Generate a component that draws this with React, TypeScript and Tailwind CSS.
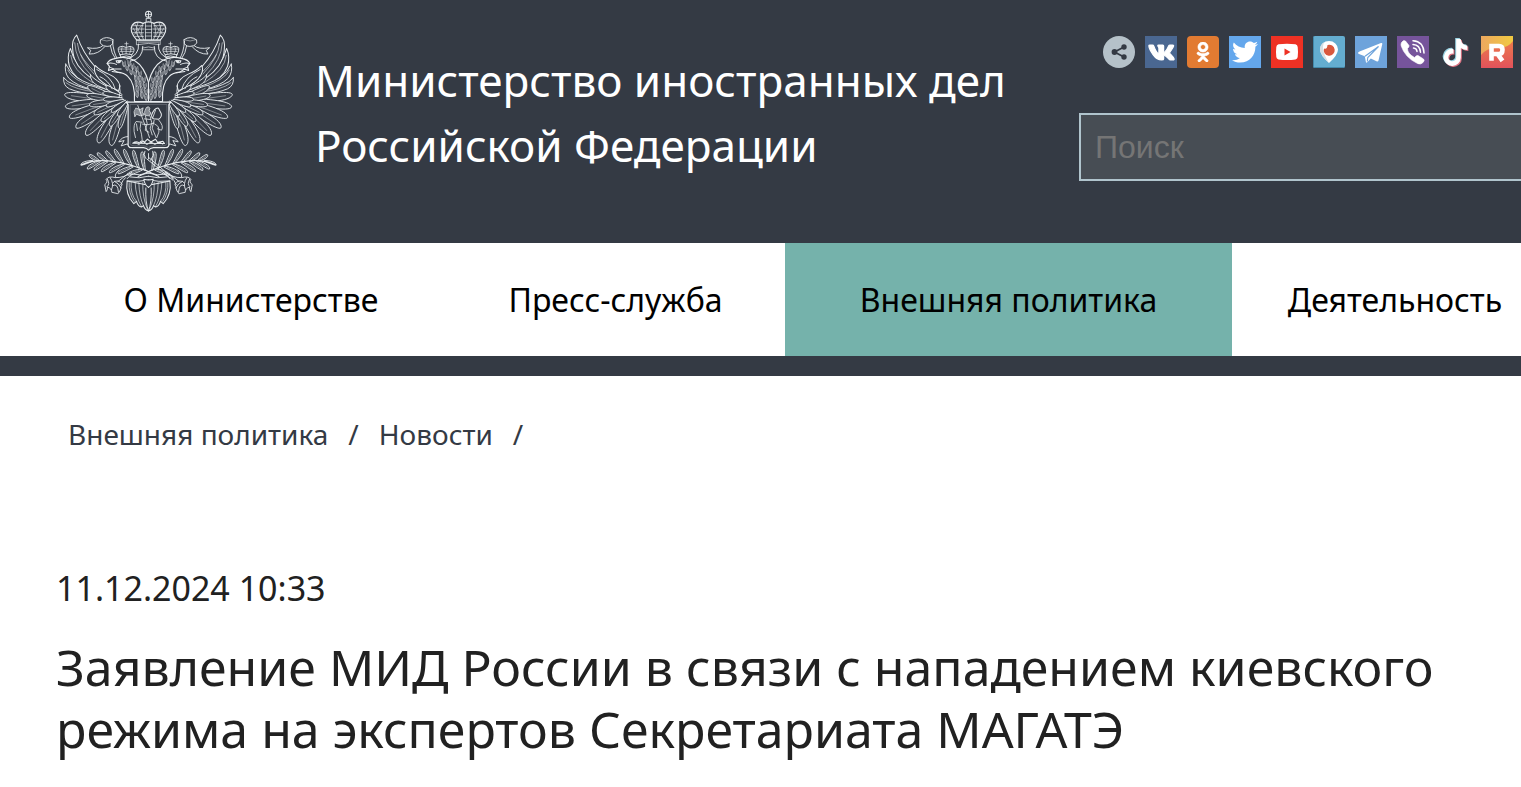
import React from "react";
import { FaOdnoklassniki, FaTiktok, FaTwitter, FaVk } from "react-icons/fa";

const DARK = "#343a44";
const LIGHT = "#e9edf0";

type Leaf = [number, number, number, number, number, number];

/* Feather from root (x0, y0) to tip (x1, y1); w is the half width, b bends the blade. */
function blade([x0, y0, x1, y1, w, b]: Leaf) {
  const dx = x1 - x0;
  const dy = y1 - y0;
  const len = Math.hypot(dx, dy);
  const nx = -dy / len;
  const ny = dx / len;
  const p = (t: number, o: number) => `${(x0 + dx * t + nx * o).toFixed(1)} ${(y0 + dy * t + ny * o).toFixed(1)}`;
  return {
    outline: `M${p(0, w * 0.3)}C${p(0.35, w + b)} ${p(0.98, w * 1.5 + b * 0.6)} ${p(1, 0)}C${p(0.98, -w * 1.3 + b * 0.6)} ${p(0.35, -w + b)} ${p(0, -w * 0.3)}`,
    rib: `M${p(0.2, b * 0.5)}Q${p(0.55, b)} ${p(0.86, b * 0.3)}`,
  };
}

const outerFeathers: Leaf[] = [
  [190, 295, 44, 283, 13, -7],
  [190, 300, 46, 320, 13, 0],
  [195, 305, 58, 352, 13, 4],
  [200, 310, 78, 383, 13, 6],
  [205, 315, 108, 405, 13, 6],
  [212, 318, 145, 428, 13, 6],
  [222, 320, 184, 436, 13, 6],
];

const middleFeathers: Leaf[] = [
  [205, 294, 113, 258, 10, -7],
  [205, 300, 110, 285, 10, -2],
  [208, 304, 118, 315, 10, 2],
  [212, 308, 132, 342, 10, 3],
  [218, 310, 154, 364, 9, 3],
  [226, 312, 180, 378, 9, 3],
  [232, 314, 208, 385, 8, 3],
];

const innerFeathers: Leaf[] = [
  [215, 285, 168, 258, 7, -3],
  [215, 290, 158, 278, 7, 0],
  [218, 296, 160, 298, 7, 0],
  [222, 300, 168, 318, 7, 1],
  [228, 302, 184, 336, 7, 1],
  [234, 304, 204, 348, 7, 1],
];

const laurel: Leaf[] = [
  [128, 482, 93, 494, 4, 3],
  [146, 481, 118, 464, 5, -2],
  [150, 483, 112, 506, 5, 3],
  [172, 482, 142, 458, 5, -3],
  [172, 484, 132, 510, 5, 3],
  [196, 485, 168, 452, 5, -3],
  [196, 487, 154, 514, 5, 3],
  [220, 489, 194, 447, 5, -3],
  [222, 492, 178, 517, 5, 3],
  [244, 495, 222, 447, 5, -3],
  [248, 499, 204, 520, 5, 3],
  [266, 503, 250, 450, 5, -3],
  [276, 508, 232, 524, 5, 2],
  [284, 510, 276, 454, 5, -3],
];

const neckTufts: [number, number][] = [
  [222, 192], [238, 190], [232, 204], [248, 200], [260, 208], [244, 216], [256, 222], [270, 222],
  [258, 236], [270, 238], [282, 240], [260, 252], [272, 254], [285, 258], [262, 268], [275, 271],
  [288, 276], [262, 284], [276, 287], [288, 293],
];

function Feathers({ items, rib }: { items: Leaf[]; rib?: boolean }) {
  return (
    <>
      {items.map((item, i) => {
        const s = blade(item);
        return (
          <g key={i}>
            <path d={s.outline} fill={DARK} />
            {rib && <path d={s.rib} fill="none" strokeWidth={1.8} opacity={0.75} />}
          </g>
        );
      })}
    </>
  );
}

function EmblemHalf() {
  return (
    <g>
      {/* raised flight feathers */}
      <path d="M80 105Q64 119 68 148Q70 196 116 232L175 270L185 240L135 200Q98 158 80 105Z" fill={DARK} strokeWidth={3} />
      <path d="M82 130Q86 174 132 222M74 128Q76 180 122 224M92 164Q110 196 150 230" fill="none" strokeWidth={1.8} />
      <path d="M61 145Q50 170 58 198Q72 236 122 256L175 278L178 262Q112 236 84 196Q68 172 61 145Z" fill={DARK} strokeWidth={3} />
      <path d="M62 166Q66 210 128 248" fill="none" strokeWidth={1.8} />
      <path d="M47 192Q42 216 56 234Q80 258 128 268L180 284L178 270Q110 252 80 232Q58 216 47 192Z" fill={DARK} />
      <path d="M53 210Q66 240 134 262" fill="none" strokeWidth={1.8} />
      <path d="M41 233Q38 256 58 266Q90 280 140 282L185 292L180 278Q110 270 74 254Q50 246 41 233Z" fill={DARK} />
      <path d="M48 248Q76 270 138 275" fill="none" strokeWidth={1.8} />
      <Feathers items={outerFeathers} rib />
      <path d="M135 196Q128 216 146 236Q168 258 205 272L210 258Q204 234 176 222Q150 212 135 196Z" fill={DARK} strokeWidth={3} />
      <path d="M121 224Q120 244 142 256Q170 270 205 282L205 272Q164 258 142 242Q128 234 121 224Z" fill={DARK} />
      <Feathers items={middleFeathers} rib />
      <Feathers items={innerFeathers} />
      <path d="M140 208Q186 230 196 268M150 230Q174 240 186 266M208 256Q213 276 207 292" fill="none" />

      {/* ribbon */}
      <path d="M152 119Q169 106 189 119L188 131Q179 141 171 139Q158 140 151 130ZM158 137Q145 149 112 143L122 151L117 162Q145 163 164 140M187 123Q190 157 201 175M181 138Q184 160 195 174" fill="none" />
      <path d="M152 119Q170 127 189 119" fill="none" strokeWidth={1.4} />

      {/* head and neck */}
      <path d="M295 247Q283 199 253 181Q226 167 197 175Q177 178 171 190L178 199L175 211L187 207L201 216Q223 218 233 229Q256 250 253 304H295Z" fill={DARK} strokeWidth={3.4} />
      <path d="M171 190Q186 186 199 193M178 201L194 207L213 207M186 214L211 218M198 182L214 181Q210 191 200 187Z" fill="none" strokeWidth={3} />
      <circle cx={206} cy={185} r={2} fill={LIGHT} />
      {neckTufts.map(([x, y], i) => (
        <path key={i} d={`M${x - 5} ${y - 9}Q${x - 7} ${y + 4} ${x} ${y + 9}Q${x + 6} ${y + 2} ${x + 3} ${y - 9}M${x - 1} ${y - 5}V${y + 5}`} fill="none" strokeWidth={1.7} />
      ))}
      <path d="M265 132Q269 166 230 177M278 139Q278 177 242 183" fill="none" strokeWidth={2.8} />

      {/* small crown */}
      <path d="M210 164Q200 147 207 141Q216 136 228 142Q241 136 249 142Q256 151 245 164Q229 158 210 164ZM212 171Q229 164 245 171L245 164M210 164L212 171" fill={DARK} />
      <path d="M228 142V161M216 140Q211 149 217 160M240 140Q246 149 239 160M206 147H250M210 154H247M229 126V139M224 131H234" fill="none" strokeWidth={2} />

      {/* laurel branch */}
      <Feathers items={laurel} rib />
      <path d="M93 494Q130 478 174 482Q250 489 326 529" fill="none" strokeWidth={3.4} />

      {/* shoulder under the shield */}
      <path d="M233 409Q215 410 206 425L222 421L213 437L232 431L239 443" fill="none" />

      {/* leg and claws */}
      <path d="M207 509Q191 523 197 532Q221 533 245 516M234 520L203 544M226 532Q218 539 212 553" fill="none" />
      <path d="M196 532Q174 526 168 538Q175 545 164 553L168 574Q173 570 172 560Q186 565 185 576L203 580Q211 575 213 558Q222 549 203 542Q190 541 188 548M172 537Q181 551 171 559M180 532Q193 549 184 569M188 556Q203 547 205 575M193 543Q207 549 213 563" fill="none" strokeWidth={2.6} />

      {/* tail */}
      <path d="M231 542Q225 584 251 610L259 603Q264 619 274 620L280 616Q284 629 295 632V555Z" fill={DARK} strokeWidth={3.2} />
      <path d="M243 546Q240 582 259 603M255 547Q257 591 274 619M266 547Q267 590 280 616M278 547Q276 591 292 627M237 547Q235 579 252 603" fill="none" strokeWidth={2} />
      <path d="M231 542Q265 546 295 539M239 530Q267 536 295 528M239 521Q268 527 295 519M231 535Q237 527 247 522" fill="none" />
    </g>
  );
}

function Emblem() {
  return (
    <svg
      viewBox="30 24 530 620"
      className="h-[207px] w-[177px] shrink-0"
      stroke={LIGHT}
      strokeWidth={2.7}
      strokeLinejoin="round"
      strokeLinecap="round"
      role="img"
      aria-label="Герб Российской Федерации"
    >
      <EmblemHalf />
      <g transform="translate(590 0) scale(-1 1)">
        <EmblemHalf />
      </g>

      {/* large crown */}
      <path d="M260 120Q236 93 246 76Q256 61 279 70Q295 61 311 70Q334 61 344 76Q354 93 330 120Z" fill={DARK} strokeWidth={3.6} />
      <path d="M260 120H330V134Q295 126 260 134ZM264 126H326M286 69V119M304 69V119M279 70Q268 94 280 119M311 70Q322 94 310 119M263 69Q251 91 270 119M327 69Q339 91 320 119M249 77H279M245 87H282M248 98H280M254 109H280M311 77H341M308 87H345M310 98H342M310 109H336M286 78H304M286 88H304M286 98H304M286 108H304M276 144Q295 137 314 144M280 149H310" fill="none" strokeWidth={2} />
      <path d="M255 73L275 110M249 84L269 118M335 73L315 110M341 84L321 118M275 75L253 103M315 75L337 103" fill="none" strokeWidth={1.6} />
      <circle cx={295} cy={43} r={9} fill={DARK} strokeWidth={3} />
      <path d="M295 34V52M286 43H304M288 65V55H302V65" fill="none" />

      {/* shield with the horseman */}
      <path d="M228 306H362L356 313V435Q355 442 344 442H310Q299 443 295 450Q291 443 280 442H246Q235 442 234 435V313Z" fill={DARK} strokeWidth={3.6} />
      <path d="M240 314V430Q242 437 252 437H281Q291 437 295 443Q299 437 309 437H338Q349 437 350 430V314Z" fill="none" strokeWidth={1.4} opacity={0.5} />
      <path d="M258 324L270 328L279 323L276 336L283 344L270 347L259 342L254 350L252 336ZM289 322Q296 316 299 324L297 332L302 338L298 347L286 346L283 338Z" fill={LIGHT} fillOpacity={0.45} strokeWidth={2.2} />
      <path d="M304 345Q313 322 325 324L333 340Q336 349 326 357L310 356Q304 352 304 345Z" fill="none" strokeWidth={3} />
      <path d="M276 366L258 364Q250 372 252 394L256 412M272 368Q266 386 274 402L276 418M286 348L291 370L285 390L296 396M300 349L305 368L300 384L306 404M312 360L306 384L318 412M326 360Q342 378 334 390L322 386M314 372Q329 377 326 396L320 412M263 316L298 412M316 330L308 352M259 371L262 391M277 372Q292 377 312 369M283 356L301 358" fill="none" strokeWidth={2.4} />
      <path d="M248 429Q260 421 268 429Q273 417 283 426L292 417L302 425L316 417L322 426L338 423L343 430ZM255 427L266 432L279 424L290 432L303 426L314 432L327 426L338 431" fill="none" strokeWidth={3.4} />

      {/* crossed stems and centre tail feather */}
      <path d="M290 476L367 539M296 472L369 534M295 460V476M286 474Q279 462 284 453M302 480Q313 465 308 453" fill="none" />
      <path d="M281 537Q284 555 295 561Q306 555 309 537Q295 541 281 537Z" fill={DARK} strokeWidth={3} />
      <path d="M287 563Q285 606 295 632Q305 606 303 563" fill={DARK} />
    </svg>
  );
}

const tile = "flex size-8 shrink-0 items-center justify-center overflow-hidden text-white";

function SocialLinks() {
  return (
    <nav aria-label="Социальные сети" className="flex gap-[10px] pl-6">
      <a href="#share" aria-label="Поделиться" className={tile}>
        <svg viewBox="0 0 32 32" className="size-8">
          <circle cx="16" cy="16" r="16" fill="#b5c1c9" />
          <path d="M21 11L11.500 16L21 21" fill="none" stroke={DARK} strokeWidth="1.800" />
          <circle cx="21" cy="11" r="2.700" fill={DARK} />
          <circle cx="11.500" cy="16" r="2.900" fill={DARK} />
          <circle cx="21" cy="21" r="2.700" fill={DARK} />
        </svg>
      </a>
      <a href="#vk" aria-label="ВКонтакте" className={`${tile} bg-[#4a6791]`}>
        <FaVk className="size-[27px]" strokeWidth={26} stroke="currentColor" />
      </a>
      <a href="#ok" aria-label="Одноклассники" className={`${tile} rounded-sm bg-[#e27b32]`}>
        <FaOdnoklassniki className="size-5" strokeWidth={16} stroke="currentColor" />
      </a>
      <a href="#twitter" aria-label="Twitter" className={`${tile} bg-[#64a7ec]`}>
        <FaTwitter className="size-[26px]" />
      </a>
      <a href="#youtube" aria-label="YouTube" className={`${tile} bg-[#ee3124]`}>
        <svg viewBox="0 0 32 32" className="size-8">
          <path d="M7.500 8.300Q16 7.300 24.500 8.300Q26.500 9 26.700 11Q27.300 16 26.700 21Q26.500 23 24.500 23.400Q16 24.400 7.500 23.400Q5.500 23 5.300 21Q4.700 16 5.300 11Q5.500 9 7.500 8.300Z" fill="#fff" />
          <path d="M13.500 12.500L19.500 16L13.500 19.500Z" fill="#ee3124" />
        </svg>
      </a>
      <a href="#periscope" aria-label="Periscope" className={`${tile} rounded-xs bg-[#64add0]`}>
        <svg viewBox="0 0 32 32" className="size-8">
          <path d="M0 0H1V31H32V32H0Z" fill="#4389aa" />
          <path d="M16 27Q7 19 7 13.500A9 8.500 0 0 1 25 13.500Q25 19 16 27Z" fill="#fff" />
          <path d="M16 27Q7 19 7 13.500Q7 8 11.500 6Q7 13 16 27Z" fill="#d7dfe3" />
          <path d="M14.500 9A5.500 5.500 0 1 1 11 12.500Q14 14 14.500 9Z" fill="#d9583d" />
        </svg>
      </a>
      <a href="#telegram" aria-label="Telegram" className={`${tile} bg-[#6ea3db]`}>
        <svg viewBox="0 0 32 32" className="size-8">
          <path d="M3 17Q3 16 4.500 15.500L26 7Q27.500 6.500 27.300 8L23.500 24.500Q23 26 21.500 25.300L15.800 22.500L12 26.500Q11 27 10.800 25.500L9.800 20.200L4 18Q3 17.700 3 17Z" fill="#fff" />
          <path d="M10 20.300L23.500 10.500L12.800 21.500L12.300 25.500" fill="none" stroke="#6ea3db" strokeWidth="1.100" />
        </svg>
      </a>
      <a href="#viber" aria-label="Viber" className={`${tile} bg-[#76549b]`}>
        <svg viewBox="0 0 32 32" className="size-8">
          <path d="M4.500 6.500Q6.500 3.500 8.500 5L12 9.500Q12.500 11 10.500 12.500Q10.300 17.500 17.500 21.500Q19.500 19 21 19.500L26.500 23Q28 24.500 26 26.500Q23.500 29 20.500 27.500Q8 21.500 4.200 10Q3.700 8 4.500 6.500Z" fill="#fff" stroke="#fff" strokeWidth="0.600" />
          <path d="M16 4.800Q26.500 5.500 27 17M16 8.500Q23 9 23.500 16.200M16.500 12Q19.800 12.300 20 15.500" fill="none" stroke="#fff" strokeWidth="1.500" strokeLinecap="round" />
        </svg>
      </a>
      <a href="#tiktok" aria-label="TikTok" className={tile}>
        <span className="grid place-items-center">
          <FaTiktok className="col-start-1 row-start-1 mr-[2px] mb-[2px] size-[27px] text-[#9bd4e4]" />
          <FaTiktok className="col-start-1 row-start-1 mt-[2px] ml-[2px] size-[27px] text-[#df7484]" />
          <FaTiktok className="col-start-1 row-start-1 size-[27px] text-white" />
        </span>
      </a>
      <a href="#rutube" aria-label="Rutube" className={tile}>
        <svg viewBox="0 0 32 32" className="size-8">
          <defs>
            <linearGradient id="rutube-top" x1="0" x2="1" y1="0" y2="0">
              <stop offset="0" stopColor="#eda85f" />
              <stop offset="1" stopColor="#f0c941" />
            </linearGradient>
            <linearGradient id="rutube-wave" x1="0" x2="0" y1="0" y2="1">
              <stop offset="0" stopColor="#ec7a4c" />
              <stop offset="1" stopColor="#e2525b" />
            </linearGradient>
          </defs>
          <path d="M0 0H32V32H0Z" fill="url(#rutube-top)" />
          <path d="M0 19Q6 11 18 12Q27 12 32 5V32H0Z" fill="url(#rutube-wave)" />
          <path d="M10.500 24.800V10H18Q21.500 10 21.500 13.800Q21.500 18 18 18H10.500M16.500 18L21.500 24.800" fill="none" stroke="#fff" strokeWidth="4.600" />
        </svg>
      </a>
    </nav>
  );
}

export default function App() {
  return (
    <div className="min-h-screen overflow-hidden bg-white font-['Noto_Sans','Open_Sans',sans-serif] text-[#212121]">
      <header className="flex h-[243px] bg-[#343a44] pl-[60px] text-white">
        <div className="pt-2">
          <Emblem />
        </div>
        <a href="#home" className="ml-[78px] w-[764px] shrink-0 pt-12 text-[44px] leading-[65px]">
          Министерство иностранных дел
          <br />
          Российской Федерации
        </a>
        <div className="flex min-w-0 flex-1 flex-col gap-[45px] pt-9">
          <SocialLinks />
          <input
            type="search"
            aria-label="Поиск"
            placeholder="Поиск"
            className="h-[68px] w-full rounded-none border-2 border-r-0 border-[#b0c4cd] bg-[#474d54] px-[14px] font-['Liberation_Sans',sans-serif] text-[32px] text-white outline-none placeholder:text-[#757575]"
          />
        </div>
      </header>

      <nav aria-label="Основное меню" className="flex h-[133px] border-b-[20px] border-[#343a44] pl-14 text-[32px] whitespace-nowrap text-black">
        <a href="#ministry" className="flex w-[390px] shrink-0 items-center justify-center">О Министерстве</a>
        <a href="#press" className="flex w-[339px] shrink-0 items-center justify-center">Пресс-служба</a>
        <a href="#policy" aria-current="page" className="flex w-[447px] shrink-0 items-center justify-center bg-[#75b2ab]">Внешняя политика</a>
        <a href="#activity" className="flex w-[326px] shrink-0 items-center justify-center">Деятельность</a>
      </nav>

      <main className="px-14">
        <nav aria-label="Навигационная цепочка" className="flex gap-5 pt-9 pl-3 text-[28px] leading-[44px] text-[#343a44]">
          <a href="#policy">Внешняя политика</a>
          <span>/</span>
          <a href="#news">Новости</a>
          <span>/</span>
        </nav>
        <time dateTime="2024-12-11T10:33" className="mt-[108px] block text-[34px] leading-[48px]">
          11.12.2024 10:33
        </time>
        <h1 className="mt-6 text-[50px] leading-[62px]">
          Заявление МИД России в связи с нападением киевского режима на экспертов Секретариата МАГАТЭ
        </h1>
      </main>
    </div>
  );
}
